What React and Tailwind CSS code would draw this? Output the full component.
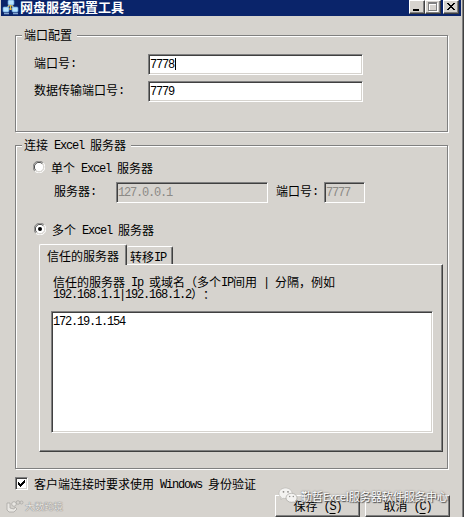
import { useState } from 'react';
import clsx from 'clsx';

const etched = 'border border-[#808080] shadow-[1px_1px_0_#fff,inset_1px_1px_0_#fff]';
const raised = 'border border-t-white border-l-white border-r-[#404040] border-b-[#404040] shadow-[inset_-1px_-1px_0_#808080]';

// Half-width runs sit on a 6px grid, full-width characters on a 12px grid
function Text({ children, className }) {
  return (
    <span className={clsx('block h-[14px] leading-[14px] whitespace-pre shrink-0', className)}>
      {children.split(/([\x20-\x7e]+)/).filter(Boolean).map((part, i) => (
        /^[\x20-\x7e]/.test(part)
          ? <span key={i} className="relative -top-px font-['Liberation_Mono','Noto_Sans_CJK_SC',monospace] text-[12px] tracking-[-1.2px]">{part}</span>
          : <span key={i}>{part}</span>
      ))}
    </span>
  );
}

function Field({ value, disabled, caret, className }) {
  return (
    <div className={clsx(
      'h-[21px] shrink-0 border border-t-[#808080] border-l-[#808080] border-r-white border-b-white pl-[1px] pt-[2px] flex',
      disabled
        ? 'text-[#8c8a86] shadow-[inset_1px_1px_0_#404040]'
        : 'bg-white shadow-[inset_1px_1px_0_#404040,inset_-1px_-1px_0_#d6d3ce]',
      className
    )}>
      <Text>{value}</Text>
      {caret && <span className="w-px h-[12px] mt-[1px] ml-[1px] bg-black" />}
    </div>
  );
}

function Radio({ checked, onClick, label, className }) {
  return (
    <button onClick={onClick} className={clsx('flex items-start h-[14px]', className)}>
      <svg width="12" height="12" viewBox="0 0 12 12" className="mr-[6px] shrink-0">
        <circle cx="6" cy="6" r="5" fill="#fff" />
        <path d="M1.8 10.2A5.5 5.5 0 0 1 10.2 1.8" fill="none" stroke="#808080" />
        <path d="M2.7 9.3A4.5 4.5 0 0 1 9.3 2.7" fill="none" stroke="#404040" />
        <path d="M10.2 1.8A5.5 5.5 0 0 1 1.8 10.2" fill="none" stroke="#fff" />
        <path d="M9.3 2.7A4.5 4.5 0 0 1 2.7 9.3" fill="none" stroke="#d6d3ce" />
        {checked && <circle cx="6" cy="6" r="2" fill="#000" />}
      </svg>
      <Text>{label}</Text>
    </button>
  );
}

function CaptionButton({ children, className }) {
  return (
    <button className={clsx('w-4 h-[14px] bg-[#d6d3ce] flex items-center justify-center', raised, className)}>
      <svg width="14" height="12" viewBox="0 0 14 12" shapeRendering="crispEdges">{children}</svg>
    </button>
  );
}

function TitleBar() {
  return (
    <div className="h-4 w-[460px] ml-px bg-[#0a246a] flex">
      <svg width="17" height="15" viewBox="0 0 17 15" className="ml-px mr-[1px] shrink-0">
        <path d="M8 4L4 10M9 4l4 6" stroke="#d9c66a" strokeWidth="1.5" />
        <rect x="6" y="0" width="6" height="5" rx="1" fill="#b8e4ff" stroke="#5a98d8" strokeWidth=".7" />
        <rect x="1" y="7" width="6" height="5" rx="1" fill="#b8e4ff" stroke="#5a98d8" strokeWidth=".7" />
        <rect x="10" y="7" width="6" height="5" rx="1" fill="#b8e4ff" stroke="#5a98d8" strokeWidth=".7" />
        <path d="M2 13.5h5M11 13.5h5" stroke="#83a4cf" strokeWidth="1.5" />
        <path d="M8.5 5v5M7 9h3" stroke="#e5b93c" strokeWidth="1.2" />
      </svg>
      <h1 className="text-white font-bold text-[13px] h-4 leading-[14px] whitespace-nowrap grow">网盘服务配置工具</h1>
      <div className="flex items-start mr-[2px]">
        <CaptionButton>
          <path d="M3 8h6v2H3z" fill="#000" />
        </CaptionButton>
        <CaptionButton>
          <path d="M3 2h9v9H3z" fill="#fff" />
          <path d="M2 1h9v9H2z" fill="#808080" />
          <path d="M3 3h7v6H3z" fill="#fff" />
          <path d="M4 4h6v5H4z" fill="#d6d3ce" />
        </CaptionButton>
        <CaptionButton className="ml-[2px]">
          <path d="M3 2h2v1h1v1h2V3h1V2h2v1h-1v1H9v1H8v1h1v1h1v1h1v1H9V8H8V7H6v1H5v1H3V8h1V7h1V6h1V5H5V4H4V3H3z" fill="#000" />
        </CaptionButton>
      </div>
    </div>
  );
}

function PushButton({ label, hotkey }) {
  return (
    <button className={clsx('w-[85px] h-[22px] shrink-0 flex justify-center pt-[3px]', raised)}>
      <Text>{label + ' ('}</Text>
      <Text className="underline underline-offset-2">{hotkey}</Text>
      <Text>)</Text>
    </button>
  );
}

export default function App() {
  const [mode, setMode] = useState('multi');
  const [auth, setAuth] = useState(true);

  return (
    <div className="relative w-[464px] h-[517px] overflow-hidden bg-[#d6d3ce] text-black text-[12px] font-['Noto_Sans_CJK_SC',sans-serif] [text-spacing-trim:space-all] border-r border-r-[#404040] shadow-[inset_-1px_0_0_#808080]">
      <div className="w-[462px]">
        <TitleBar />

        {/* Ports */}
        <section className={clsx('ml-[15px] mt-[19px] w-[433px] h-[97px]', etched)}>
          <h2 className="-mt-[8px] ml-[6px] w-[55px] pl-[2px] bg-[#d6d3ce]"><Text>端口配置</Text></h2>
          <div className="flex mt-[12px] ml-[18px]">
            <Text className="w-[114px] mt-[2px]">端口号:</Text>
            <Field value="7778" caret className="w-[215px]" />
          </div>
          <div className="flex mt-[6px] ml-[18px]">
            <Text className="w-[114px] mt-[2px]">数据传输端口号:</Text>
            <Field value="7779" className="w-[215px]" />
          </div>
        </section>

        {/* Servers */}
        <section className={clsx('ml-[15px] mt-[13px] w-[433px] h-[324px]', etched)}>
          <h2 className="-mt-[8px] ml-[6px] w-[109px] pl-[2px] bg-[#d6d3ce]"><Text>连接 Excel 服务器</Text></h2>
          <Radio
            label="单个 Excel 服务器"
            checked={mode === 'single'}
            onClick={() => setMode('single')}
            className="ml-[17px] mt-[9px]"
          />
          <div className="flex mt-[7px] ml-[38px]">
            <Text className="w-[62px] mt-[2px]">服务器:</Text>
            <Field value="127.0.0.1" disabled={mode !== 'single'} className="w-[152px]" />
            <Text className="w-[48px] ml-[8px] mt-[2px]">端口号:</Text>
            <Field value="7777" disabled={mode !== 'single'} className="w-[41px]" />
          </div>
          <Radio
            label="多个 Excel 服务器"
            checked={mode === 'multi'}
            onClick={() => setMode('multi')}
            className="ml-[18px] mt-[20px]"
          />

          <div className="flex items-end mt-[7px] ml-[23px] h-[20px]">
            <button className="relative z-10 w-[88px] h-[21px] -mb-px shrink-0 bg-[#d6d3ce] rounded-t-[2px] border-t border-l border-r border-t-white border-l-white border-r-[#404040] shadow-[inset_-1px_0_0_#808080] pl-[7px] pt-[2px] text-left">
              <Text>信任的服务器</Text>
            </button>
            <button className="w-[46px] h-[18px] shrink-0 rounded-t-[2px] border-t border-r border-t-white border-r-[#404040] shadow-[inset_-1px_0_0_#808080] pl-[3px] pt-[2px] text-left">
              <Text>转移IP</Text>
            </button>
          </div>
          <div className={clsx('ml-[23px] w-[404px] h-[188px] pl-[11px] pt-[10px]', raised)}>
            <div className="pl-[2px]">
              <Text>信任的服务器 Ip 或域名（多个IP间用 | 分隔，例如</Text>
              <Text className="-mt-[2px]">192.168.1.1|192.168.1.2）：</Text>
            </div>
            <Field value="172.19.1.154" className="w-[382px] !h-[122px] mt-[10px]" />
          </div>
        </section>

        <button onClick={() => setAuth(!auth)} className="flex items-start ml-[15px] mt-[8px]">
          <span className="w-[13px] h-[13px] mr-[6px] bg-white border border-t-[#808080] border-l-[#808080] border-r-white border-b-white shadow-[inset_1px_1px_0_#404040,inset_-1px_-1px_0_#d6d3ce]">
            {auth && (
              <svg width="11" height="11" viewBox="0 0 11 11" shapeRendering="crispEdges">
                <path d="M2 4h1v1h1v1h1V5h1V4h1V3h1V2h1v3H8v1H7v1H6v1H5v1H4V8H3V7H2z" fill="#000" />
              </svg>
            )}
          </span>
          <Text>客户端连接时要求使用 Windows 身份验证</Text>
        </button>

        <div className="flex ml-[275px] mt-[4px] gap-[5px]">
          <PushButton label="保存" hotkey="S" />
          <PushButton label="取消" hotkey="C" />
        </div>
      </div>

      {/* Watermarks */}
      <div className="absolute left-[6px] top-[499px] flex items-center text-[#e9e7e3] [text-shadow:0_0_1px_#77757a,0_0_1px_#8d8b88]">
        <svg width="18" height="14" viewBox="0 0 18 14" fill="none" stroke="#aaa8a4" strokeWidth=".8">
          <path d="M1 4h3v5l4 1 1-2 2 2-3 3H3l-2-2z" fill="#e9e7e3" />
          <circle cx="8" cy="5" r="2.3" fill="#e9e7e3" />
          <circle cx="12" cy="3.5" r="1.8" />
          <circle cx="15.5" cy="3.5" r="1.5" />
        </svg>
        <span className="text-[9.5px] leading-[14px] ml-px whitespace-nowrap">大数跨境</span>
      </div>
      <div className="absolute left-[278px] top-[487px] flex">
        <svg width="20" height="17" viewBox="0 0 20 17" className="shrink-0">
          <path d="M7.5 1C3.8 1 1 3.3 1 6.3c0 1.7.9 3.1 2.3 4.1L2.8 12.500l2.300-1.200c4 .8 9-1 9-5C14.100 3.300 11.200 1 7.500 1z" fill="#f4f3f1" stroke="#b4b2ae" strokeWidth=".6" />
          <path d="M13.500 6.300c-3.200 0-5.500 2-5.500 4.500s2.300 4.500 5.500 4.500c.7 0 1.400-.1 2-.3l2 1-.5-1.700c1.300-.8 2-2 2-3.500 0-2.500-2.300-4.500-5.500-4.500z" fill="#f4f3f1" stroke="#9a9894" strokeWidth=".6" />
          <g fill="#8d8b88">
            <circle cx="5.500" cy="4.800" r=".9" /><circle cx="10" cy="4.800" r=".9" />
            <circle cx="11.700" cy="9.500" r=".7" /><circle cx="15.300" cy="9.500" r=".7" />
          </g>
        </svg>
        <span className="ml-[3px] text-[11px] leading-[18px] whitespace-nowrap text-white [text-shadow:1px_1px_1px_#444,0_0_2px_#666]">勤哲Excel服务器软件服务中心</span>
      </div>
    </div>
  );
}
